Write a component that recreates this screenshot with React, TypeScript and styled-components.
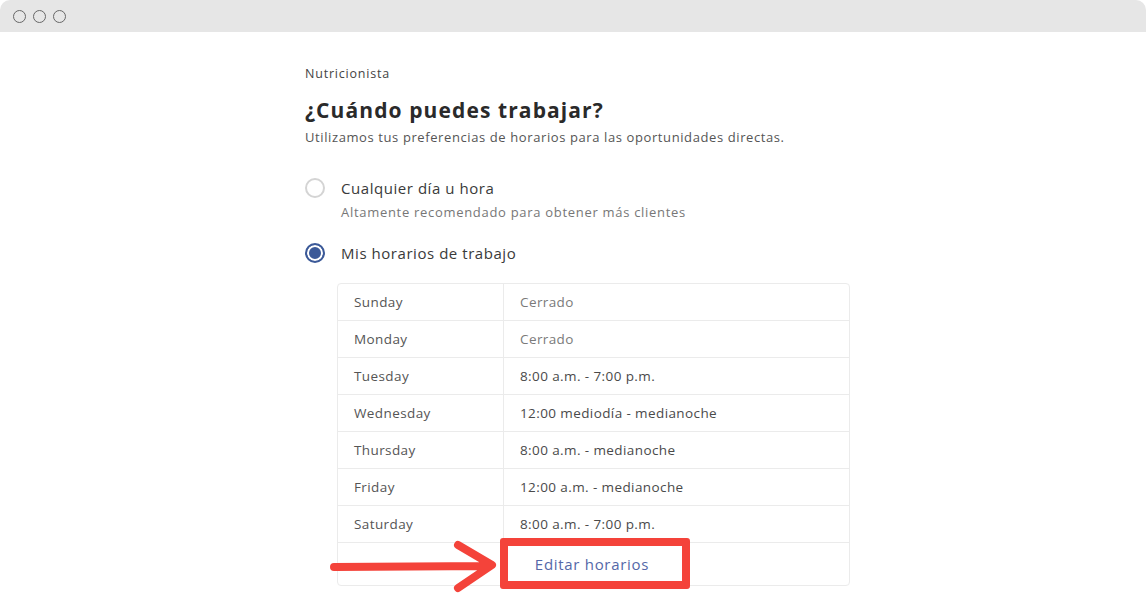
import styled, { createGlobalStyle } from 'styled-components';

const GlobalStyle = createGlobalStyle`
  html, body {
    margin: 0;
    padding: 0;
    background: #ffffff;
  }
  body {
    font-family: 'Open Sans', 'Noto Sans', sans-serif;
    color: #333;
  }
`;

interface Hours {
  day: string;
  value: string;
  closed?: boolean;
}

const schedule: Hours[] = [
  { day: 'Sunday', value: 'Cerrado', closed: true },
  { day: 'Monday', value: 'Cerrado', closed: true },
  { day: 'Tuesday', value: '8:00 a.m. - 7:00 p.m.' },
  { day: 'Wednesday', value: '12:00 mediodía - medianoche' },
  { day: 'Thursday', value: '8:00 a.m. - medianoche' },
  { day: 'Friday', value: '12:00 a.m. - medianoche' },
  { day: 'Saturday', value: '8:00 a.m. - 7:00 p.m.' },
];

const App = () => {
  return (
    <>
      <GlobalStyle />
      <Window>
        <TitleBar>
          <Dot />
          <Dot />
          <Dot />
        </TitleBar>
        <Content>
          <Eyebrow>Nutricionista</Eyebrow>
          <Heading>¿Cuándo puedes trabajar?</Heading>
          <Lead>Utilizamos tus preferencias de horarios para las oportunidades directas.</Lead>

          <Option>
            <Radio />
            <OptionText>
              <OptionLabel>Cualquier día u hora</OptionLabel>
              <OptionHint>Altamente recomendado para obtener más clientes</OptionHint>
            </OptionText>
          </Option>

          <Option $second>
            <Radio $checked />
            <OptionText>
              <OptionLabel>Mis horarios de trabajo</OptionLabel>
            </OptionText>
          </Option>

          <Table>
            {schedule.map((row) => (
              <Row key={row.day}>
                <DayCell>{row.day}</DayCell>
                <ValueCell $closed={row.closed}>{row.value}</ValueCell>
              </Row>
            ))}
            <EditRow>
              <EditSpacer />
              <Highlight>
                <Arrow width="172" height="54" viewBox="0 0 172 54">
                  <path
                    d="M4 27 L160 26 M128 5 L162 25 L128 48"
                    fill="none"
                    stroke="#f4433a"
                    strokeWidth="8"
                    strokeLinecap="round"
                    strokeLinejoin="round"
                  />
                </Arrow>
                <EditButton>Editar horarios</EditButton>
              </Highlight>
            </EditRow>
          </Table>
        </Content>
      </Window>
    </>
  );
};

const Window = styled.div`
  width: 1146px;
  height: 611px;
  background: #fff;
  border-radius: 10px;
  overflow: hidden;
  display: flex;
  flex-direction: column;
`;

const TitleBar = styled.div`
  height: 32px;
  background: #e6e6e6;
  display: flex;
  align-items: center;
  gap: 7px;
  padding-left: 13px;
  flex-shrink: 0;
`;

const Dot = styled.span`
  width: 13px;
  height: 13px;
  border: 1.3px solid #666;
  border-radius: 50%;
  box-sizing: border-box;
`;

const Content = styled.div`
  display: flex;
  flex-direction: column;
  padding-left: 305px;
  padding-top: 34px;
`;

const Eyebrow = styled.div`
  font-size: 12.5px;
  color: #444;
  line-height: 16px;
  letter-spacing: 0.8px;
`;

const Heading = styled.h1`
  margin: 14px 0 0;
  font-size: 21px;
  font-weight: 700;
  color: #2a2a2a;
  line-height: 28px;
  letter-spacing: 1.1px;
`;

const Lead = styled.p`
  margin: 5px 0 0;
  font-size: 13px;
  color: #555;
  line-height: 16px;
  letter-spacing: 0.6px;
`;

const Option = styled.div<{ $second?: boolean }>`
  display: flex;
  align-items: flex-start;
  gap: 16px;
  margin-top: ${(p) => (p.$second ? '24px' : '34px')};
`;

const Radio = styled.span<{ $checked?: boolean }>`
  width: 20px;
  height: 20px;
  box-sizing: border-box;
  border-radius: 50%;
  flex-shrink: 0;
  margin-top: -1px;
  border: ${(p) => (p.$checked ? '2px solid #3b5998' : '2px solid #d4d4d4')};
  background: ${(p) => (p.$checked ? '#3b5998' : '#fff')};
  box-shadow: ${(p) => (p.$checked ? 'inset 0 0 0 2px #fff' : 'none')};
`;

const OptionText = styled.div`
  display: flex;
  flex-direction: column;
  gap: 7px;
`;

const OptionLabel = styled.div`
  font-size: 15px;
  color: #3a3a3a;
  line-height: 18px;
  letter-spacing: 0.55px;
`;

const OptionHint = styled.div`
  font-size: 13px;
  color: #777;
  line-height: 16px;
  letter-spacing: 0.7px;
`;

const Table = styled.div`
  margin-top: 20px;
  margin-left: 32px;
  width: 511px;
  border: 1px solid #ebebeb;
  border-radius: 4px;
  display: flex;
  flex-direction: column;
`;

const Row = styled.div`
  display: grid;
  grid-template-columns: 166px 1fr;
  height: 37px;
  border-bottom: 1px solid #ebebeb;
  box-sizing: border-box;
`;

const DayCell = styled.div`
  display: flex;
  align-items: center;
  padding-left: 16px;
  font-size: 13.5px;
  color: #555;
  letter-spacing: 0.4px;
  border-right: 1px solid #ebebeb;
`;

const ValueCell = styled.div<{ $closed?: boolean }>`
  display: flex;
  align-items: center;
  padding-left: 16px;
  font-size: 13.5px;
  letter-spacing: 0.4px;
  color: ${(p) => (p.$closed ? '#7a7a7a' : '#4a4a4a')};
`;

const EditRow = styled.div`
  display: flex;
  height: 42px;
  align-items: center;
`;

const EditSpacer = styled.div`
  width: 162px;
`;

const Highlight = styled.div`
  position: relative;
  width: 190px;
  height: 51px;
  box-sizing: border-box;
  border: 8px solid #f4433a;
  border-radius: 3px;
  display: flex;
  align-items: center;
  justify-content: center;
  margin-top: -1px;
`;

const Arrow = styled.svg`
  position: absolute;
  left: -178px;
  top: -6px;
`;

const EditButton = styled.button`
  border: none;
  background: transparent;
  font-family: inherit;
  font-size: 15px;
  letter-spacing: 0.7px;
  color: #5468a8;
  cursor: pointer;
  padding: 0;
  margin-left: -6px;
`;

export default App;
